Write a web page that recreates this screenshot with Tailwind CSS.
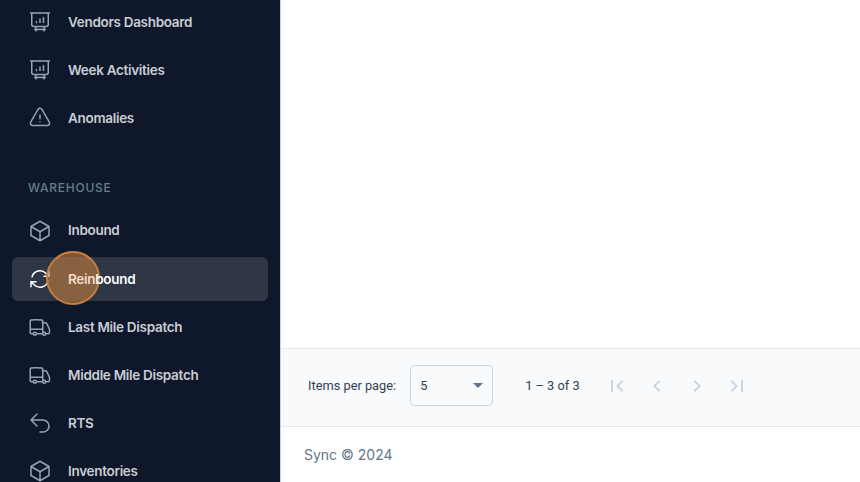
<!doctype html>
<html>
<head>
<meta charset="utf-8">
<script src="https://cdn.jsdelivr.net/npm/@tailwindcss/browser@4"></script>
</head>
<body class="m-0 overflow-hidden bg-white font-['Inter',sans-serif]">
<div class="relative flex h-[482px] w-[860px] overflow-hidden">
  <aside class="flex h-full w-[280px] shrink-0 flex-col overflow-hidden bg-[#0f172a] px-3 text-[13.5px] font-semibold tracking-[-0.3px] text-[#c9cdd5]">
    <nav class="flex flex-col gap-1">
      <a class="flex h-11 shrink-0 items-center gap-4 rounded-md px-4">
        <svg class="h-6 w-6 shrink-0" fill="none" viewBox="0 0 24 24" stroke="#94a3b8" stroke-width="1.5" stroke-linecap="round" stroke-linejoin="round"><path d="M2.5 3h19M3.75 3v11.5a2 2 0 0 0 2 2h12.5a2 2 0 0 0 2-2V3M8 16.5V21M16 16.5V21M6.5 19.5h11M8.5 12.5v-1M12 12.5v-3.5M15.5 12.5V7.5"/></svg>
        <span>Vendors Dashboard</span>
      </a>
      <a class="flex h-11 shrink-0 items-center gap-4 rounded-md px-4">
        <svg class="h-6 w-6 shrink-0" fill="none" viewBox="0 0 24 24" stroke="#94a3b8" stroke-width="1.5" stroke-linecap="round" stroke-linejoin="round"><path d="M2.5 3h19M3.75 3v11.5a2 2 0 0 0 2 2h12.5a2 2 0 0 0 2-2V3M8 16.5V21M16 16.5V21M6.5 19.5h11M8.5 12.5v-1M12 12.5v-3.5M15.5 12.5V7.5"/></svg>
        <span>Week Activities</span>
      </a>
      <a class="flex h-11 shrink-0 items-center gap-4 rounded-md px-4">
        <svg class="h-6 w-6 shrink-0" fill="none" viewBox="0 0 24 24" stroke="#94a3b8" stroke-width="1.5" stroke-linecap="round" stroke-linejoin="round"><path d="M12 9v3.75m-9.3 3.38c-.87 1.5.22 3.37 1.95 3.37h14.7c1.73 0 2.82-1.87 1.95-3.37L13.95 3.38c-.87-1.5-3.03-1.5-3.9 0L2.7 16.13ZM12 15.75h.01v.01H12v-.01Z"/></svg>
        <span>Anomalies</span>
      </a>
    </nav>
    <div class="mt-[38px] mb-[12px] flex h-[19px] shrink-0 items-center px-4 text-[12px] font-medium tracking-[0.75px] text-[#64808f]">WAREHOUSE</div>
    <nav class="flex flex-col gap-1">
      <a class="flex h-11 shrink-0 items-center gap-4 rounded-md px-4">
        <svg class="h-6 w-6 shrink-0" fill="none" viewBox="0 0 24 24" stroke="#94a3b8" stroke-width="1.5" stroke-linecap="round" stroke-linejoin="round"><path d="m21 7.5-9-5.25L3 7.5m18 0-9 5.25m9-5.25v9L12 21.75M3 7.5l9 5.25M3 7.5v9l9 5.25m0-9v9"/></svg>
        <span class="pb-px">Inbound</span>
      </a>
      <a class="flex h-11 shrink-0 items-center gap-4 rounded-md bg-[#2f3645] px-4 text-[#f8fafc]">
        <svg class="h-6 w-6 shrink-0" fill="none" viewBox="0 0 24 24" stroke="#ffffff" stroke-width="1.5" stroke-linecap="round" stroke-linejoin="round"><path d="M16.02 9.35h5v-.01M2.98 19.64v-5m0 0h5m-5 0 3.18 3.19a8.25 8.25 0 0 0 13.8-3.7M4.03 9.86a8.25 8.25 0 0 1 13.8-3.7l3.18 3.18m0-5v5"/></svg>
        <span class="relative z-10"><span class="text-[#f5dcc4]">Rein</span>bound</span>
      </a>
      <a class="flex h-11 shrink-0 items-center gap-4 rounded-md px-4">
        <svg class="h-6 w-6 shrink-0" fill="none" viewBox="0 0 24 24" stroke="#94a3b8" stroke-width="1.5" stroke-linecap="round" stroke-linejoin="round"><path d="M8.25 18.75a1.5 1.5 0 0 1-3 0m3 0a1.5 1.5 0 0 0-3 0m3 0h6m-9 0H3.38a1.13 1.13 0 0 1-1.13-1.13V6.2c0-.57.42-1.05.99-1.1a48.6 48.6 0 0 1 10.52 0c.57.06.99.54.99 1.1v12.55m0 0h-1.5m1.5 0a1.5 1.5 0 0 0 3 0m-3 0a1.5 1.5 0 0 1 3 0m0 0h2.63c.62 0 1.13-.5 1.13-1.13v-2.37c0-.5-.1-1-.3-1.45l-2.4-5.1a1.5 1.5 0 0 0-1.36-.86H14.25M2.25 14.25h12"/></svg>
        <span>Last Mile Dispatch</span>
      </a>
      <a class="flex h-11 shrink-0 items-center gap-4 rounded-md px-4">
        <svg class="h-6 w-6 shrink-0" fill="none" viewBox="0 0 24 24" stroke="#94a3b8" stroke-width="1.5" stroke-linecap="round" stroke-linejoin="round"><path d="M8.25 18.75a1.5 1.5 0 0 1-3 0m3 0a1.5 1.5 0 0 0-3 0m3 0h6m-9 0H3.38a1.13 1.13 0 0 1-1.13-1.13V6.2c0-.57.42-1.05.99-1.1a48.6 48.6 0 0 1 10.52 0c.57.06.99.54.99 1.1v12.55m0 0h-1.5m1.5 0a1.5 1.5 0 0 0 3 0m-3 0a1.5 1.5 0 0 1 3 0m0 0h2.63c.62 0 1.13-.5 1.13-1.13v-2.37c0-.5-.1-1-.3-1.45l-2.4-5.1a1.5 1.5 0 0 0-1.36-.86H14.25M2.25 14.25h12"/></svg>
        <span>Middle Mile Dispatch</span>
      </a>
      <a class="flex h-11 shrink-0 items-center gap-4 rounded-md px-4">
        <svg class="h-6 w-6 shrink-0" fill="none" viewBox="0 0 24 24" stroke="#94a3b8" stroke-width="1.5" stroke-linecap="round" stroke-linejoin="round"><path d="M9 15 3 9m0 0 6-6M3 9h12a6 6 0 0 1 0 12h-3"/></svg>
        <span>RTS</span>
      </a>
      <a class="flex h-11 shrink-0 items-center gap-4 rounded-md px-4">
        <svg class="h-6 w-6 shrink-0" fill="none" viewBox="0 0 24 24" stroke="#94a3b8" stroke-width="1.5" stroke-linecap="round" stroke-linejoin="round"><path d="m21 7.5-9-5.25L3 7.5m18 0-9 5.25m9-5.25v9L12 21.75M3 7.5l9 5.25M3 7.5v9l9 5.25m0-9v9"/></svg>
        <span>Inventories</span>
      </a>
    </nav>
  </aside>
  <main class="flex min-w-0 flex-1 flex-col border-l border-[#cbd5e1]">
    <div class="h-[348px] shrink-0 bg-white"></div>
    <div class="flex h-[79px] shrink-0 items-center border-y border-[#e2e8f0] bg-[#f8fafc] pb-[4px] pl-[27px] font-['Roboto',sans-serif] text-[12.8px] text-[#334155]">
      <span class="mr-[14px]">Items per page:</span>
      <div class="flex h-[41px] w-[83px] items-center justify-between rounded-[4px] border border-[#cbd5e1] pr-[9px] pl-[9px]">
        <span>5</span>
        <span class="h-0 w-0 border-x-[5px] border-t-[5px] border-x-transparent border-t-[#64748b]"></span>
      </div>
      <span class="ml-[32px]">1 – 3 of 3</span>
      <div class="ml-[25px] flex items-center gap-4">
        <svg class="h-6 w-6" viewBox="0 0 24 24" fill="#cbd5e1"><path d="M18.41 16.59 13.82 12l4.59-4.59L17 6l-6 6 6 6zM6 6h2v12H6z"/></svg>
        <svg class="h-6 w-6" viewBox="0 0 24 24" fill="#cbd5e1"><path d="M15.41 7.41 14 6l-6 6 6 6 1.41-1.41L10.83 12z"/></svg>
        <svg class="h-6 w-6" viewBox="0 0 24 24" fill="#cbd5e1"><path d="M10 6 8.59 7.41 13.17 12l-4.58 4.59L10 18l6-6z"/></svg>
        <svg class="h-6 w-6" viewBox="0 0 24 24" fill="#cbd5e1"><path d="M5.59 7.41 10.18 12l-4.59 4.59L7 18l6-6-6-6zM16 6h2v12h-2z"/></svg>
      </div>
    </div>
    <footer class="flex flex-1 items-center bg-white pl-[23px] text-[14px] font-normal text-[#64748b]">Sync © 2024</footer>
  </main>
  <div class="absolute top-[251px] left-[46px] h-[54px] w-[54px] rounded-full border-2 border-[#c47f3f] bg-[#c47f3f]/60"></div>
</div>
</body>
</html>
